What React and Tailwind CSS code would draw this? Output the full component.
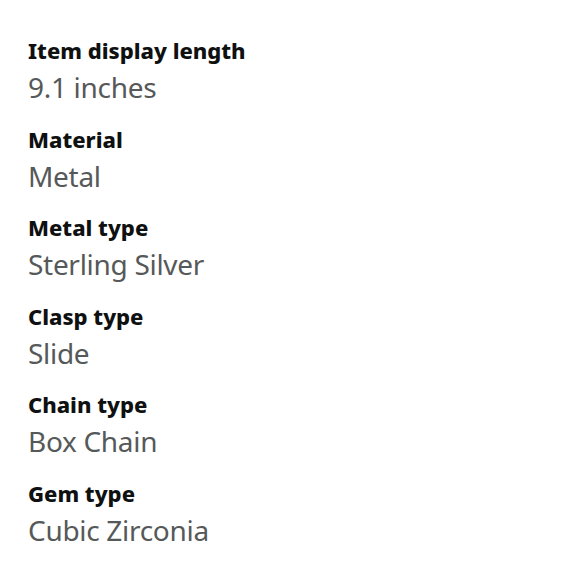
const rows = [
  ['Item display length', '9.1 inches'],
  ['Material', 'Metal'],
  ['Metal type', 'Sterling Silver'],
  ['Clasp type', 'Slide'],
  ['Chain type', 'Box Chain'],
  ['Gem type', 'Cubic Zirconia'],
];

export default function App() {
  return (
    <div className="w-[580px] h-[580px] bg-white pl-[28px] pt-[33px] font-['Noto_Sans',sans-serif]">
      <div className="flex flex-col gap-[14.6px]">
        {rows.map(([label, value]) => (
          <div key={label}>
            <div className="text-[22px] leading-[34px] font-extrabold text-[#0f1111]">{label}</div>
            <div className="text-[28px] leading-[40px] text-[#565959] tracking-[-0.3px]">{value}</div>
          </div>
        ))}
      </div>
    </div>
  );
}
